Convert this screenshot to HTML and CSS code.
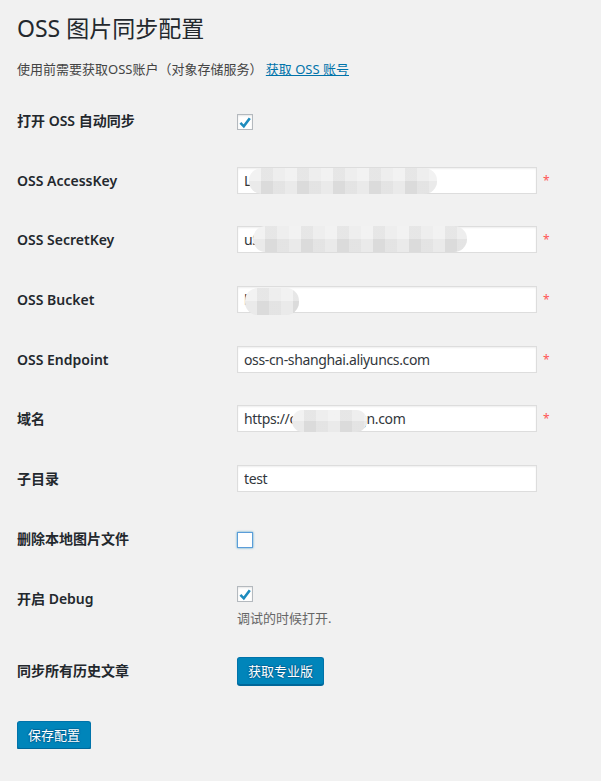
FILE: index.html
```html
<!DOCTYPE html>
<html lang="zh-CN">
<head>
<meta charset="utf-8">
<title>OSS 图片同步配置</title>
<link rel="stylesheet" href="styles.css">
</head>
<body>
<div class="wrap">
  <h1 class="title">OSS 图片同步配置</h1>
  <p class="intro">使用前需要获取OSS账户（对象存储服务） <a href="#">获取 OSS 账号</a></p>

  <form class="form">
    <div class="row">
      <div class="label">打开 OSS 自动同步</div>
      <div class="field field-check">
        <span class="checkbox"><svg viewBox="0 0 16 16" width="16" height="16"><path d="M3.4 8.9 L6.8 12.3 L12.8 4.3" fill="none" stroke="#1e8cbe" stroke-width="2.6" stroke-linecap="butt" stroke-linejoin="miter"/></svg></span>
      </div>
    </div>

    <div class="row">
      <div class="label">OSS AccessKey</div>
      <div class="field">
        <span class="input-wrap"><input class="text" type="text" value="LTAIxxxxxxxxxxxxxxxxxx"><span class="mosaic mosaic-ak"></span></span>
        <span class="req">*</span>
      </div>
    </div>

    <div class="row">
      <div class="label">OSS SecretKey</div>
      <div class="field">
        <span class="input-wrap"><input class="text" type="text" value="uSxxxxxxxxxxxxxxxxxxxxxxxx"><span class="mosaic mosaic-sk"></span></span>
        <span class="req">*</span>
      </div>
    </div>

    <div class="row">
      <div class="label">OSS Bucket</div>
      <div class="field">
        <span class="input-wrap"><input class="text" type="text" value="bucket"><span class="mosaic mosaic-bk"></span></span>
        <span class="req">*</span>
      </div>
    </div>

    <div class="row">
      <div class="label">OSS Endpoint</div>
      <div class="field">
        <span class="input-wrap"><input class="text" type="text" value="oss-cn-shanghai.aliyuncs.com"></span>
        <span class="req">*</span>
      </div>
    </div>

    <div class="row">
      <div class="label">域名</div>
      <div class="field">
        <span class="input-wrap"><input class="text" type="text" value="https://cdn.abcdefgn.com"><span class="mosaic mosaic-dm"></span></span>
        <span class="req">*</span>
      </div>
    </div>

    <div class="row">
      <div class="label">子目录</div>
      <div class="field">
        <span class="input-wrap"><input class="text" type="text" value="test"></span>
      </div>
    </div>

    <div class="row">
      <div class="label">删除本地图片文件</div>
      <div class="field field-check">
        <span class="checkbox checkbox-focus"></span>
      </div>
    </div>

    <div class="row row-debug">
      <div class="label">开启 Debug</div>
      <div class="field field-debug">
        <span class="checkbox"><svg viewBox="0 0 16 16" width="16" height="16"><path d="M3.4 8.9 L6.8 12.3 L12.8 4.3" fill="none" stroke="#1e8cbe" stroke-width="2.6"/></svg></span>
        <p class="description">调试的时候打开.</p>
      </div>
    </div>

    <div class="row row-sync">
      <div class="label">同步所有历史文章</div>
      <div class="field">
        <button type="button" class="button">获取专业版</button>
      </div>
    </div>

    <p class="submit"><button type="button" class="button">保存配置</button></p>
  </form>
</div>
</body>
</html>
```

FILE: styles.css
```css
html, body {
  margin: 0;
  padding: 0;
  background: #f1f1f1;
}

body {
  font-family: "Noto Sans", "Noto Sans CJK SC", sans-serif;
  color: #23282d;
  font-size: 13px;
}

.wrap {
  padding: 0 17px;
}

.title {
  margin: 13px 0 0;
  font-size: 23px;
  font-weight: 400;
  line-height: 30px;
  color: #23282d;
}

.intro {
  margin: 16px 0 0;
  font-size: 13px;
  line-height: 20px;
  color: #444;
}

.intro a {
  color: #0073aa;
  text-decoration: underline;
}

.form {
  margin-top: 13px;
}

.row {
  display: grid;
  grid-template-columns: 220px 1fr;
  height: 59.7px;
}

.label {
  padding-top: 20px;
  font-size: 14px;
  font-weight: 600;
  line-height: 18px;
  color: #23282d;
}

.field {
  padding-top: 15px;
  display: flex;
  align-items: flex-start;
}

.field-check {
  padding-top: 22px;
}

.row-debug {
  height: 72px;
}

.field-debug {
  padding-top: 16px;
  flex-direction: column;
}

.row-sync {
  height: 58px;
}

.input-wrap {
  position: relative;
  display: block;
  width: 300px;
  height: 27px;
}

.text {
  box-sizing: border-box;
  width: 300px;
  height: 27px;
  margin: 0;
  padding: 0 6px;
  border: 1px solid #ddd;
  border-radius: 0;
  background: #fff;
  box-shadow: inset 0 1px 2px rgba(0, 0, 0, 0.07);
  font-family: "Noto Sans", "Noto Sans CJK SC", sans-serif;
  font-size: 14px;
  letter-spacing: -0.35px;
  color: #32373c;
  outline: none;
}

.req {
  margin-left: 6px;
  margin-top: 8px;
  font-size: 12px;
  line-height: 12px;
  color: #f55;
}

.mosaic {
  position: absolute;
  border-radius: 13px;
  background:
    linear-gradient(#ebebeb 0 50%, #dfdfdf 50% 100%);
  background-color: #e6e6e6;
  overflow: hidden;
}

.mosaic::before {
  content: "";
  position: absolute;
  inset: 0;
  background: repeating-linear-gradient(90deg,
    rgba(255,255,255,0.35) 0 12px,
    rgba(0,0,0,0.02) 12px 24px,
    rgba(255,255,255,0.15) 24px 36px);
}

.mosaic-ak {
  left: 12px;
  top: 1px;
  width: 188px;
  height: 26px;
}

.mosaic-sk {
  left: 16px;
  top: 0;
  width: 214px;
  height: 26px;
}

.mosaic-bk {
  left: 8px;
  top: 2px;
  width: 54px;
  height: 27px;
}

.mosaic-dm {
  left: 55px;
  top: 5px;
  width: 75px;
  height: 22px;
}

.checkbox {
  box-sizing: border-box;
  display: block;
  width: 16px;
  height: 16px;
  border: 1px solid #b4b9be;
  background: #fff;
  box-shadow: inset 0 1px 2px rgba(0, 0, 0, 0.1);
  position: relative;
}

.checkbox svg {
  position: absolute;
  left: -1px;
  top: -1px;
}

.checkbox-focus {
  border-color: #5b9dd9;
  box-shadow: 0 0 2px rgba(30, 140, 190, 0.8);
}

.description {
  margin: 6px 0 0;
  font-size: 13px;
  line-height: 20px;
  color: #666;
}

.button {
  box-sizing: border-box;
  height: 28px;
  margin: 0;
  padding: 0 10px;
  font-family: "Noto Sans", "Noto Sans CJK SC", sans-serif;
  font-size: 13px;
  line-height: 26px;
  color: #fff;
  background: #0085ba;
  border: 1px solid #0073aa;
  border-bottom-color: #006799;
  border-radius: 3px;
  box-shadow: 0 1px 0 #006799;
  text-shadow: 0 -1px 1px #006799, 1px 0 1px #006799, 0 1px 1px #006799, -1px 0 1px #006799;
  cursor: pointer;
}

.submit {
  margin: 21px 0 0;
}
```
